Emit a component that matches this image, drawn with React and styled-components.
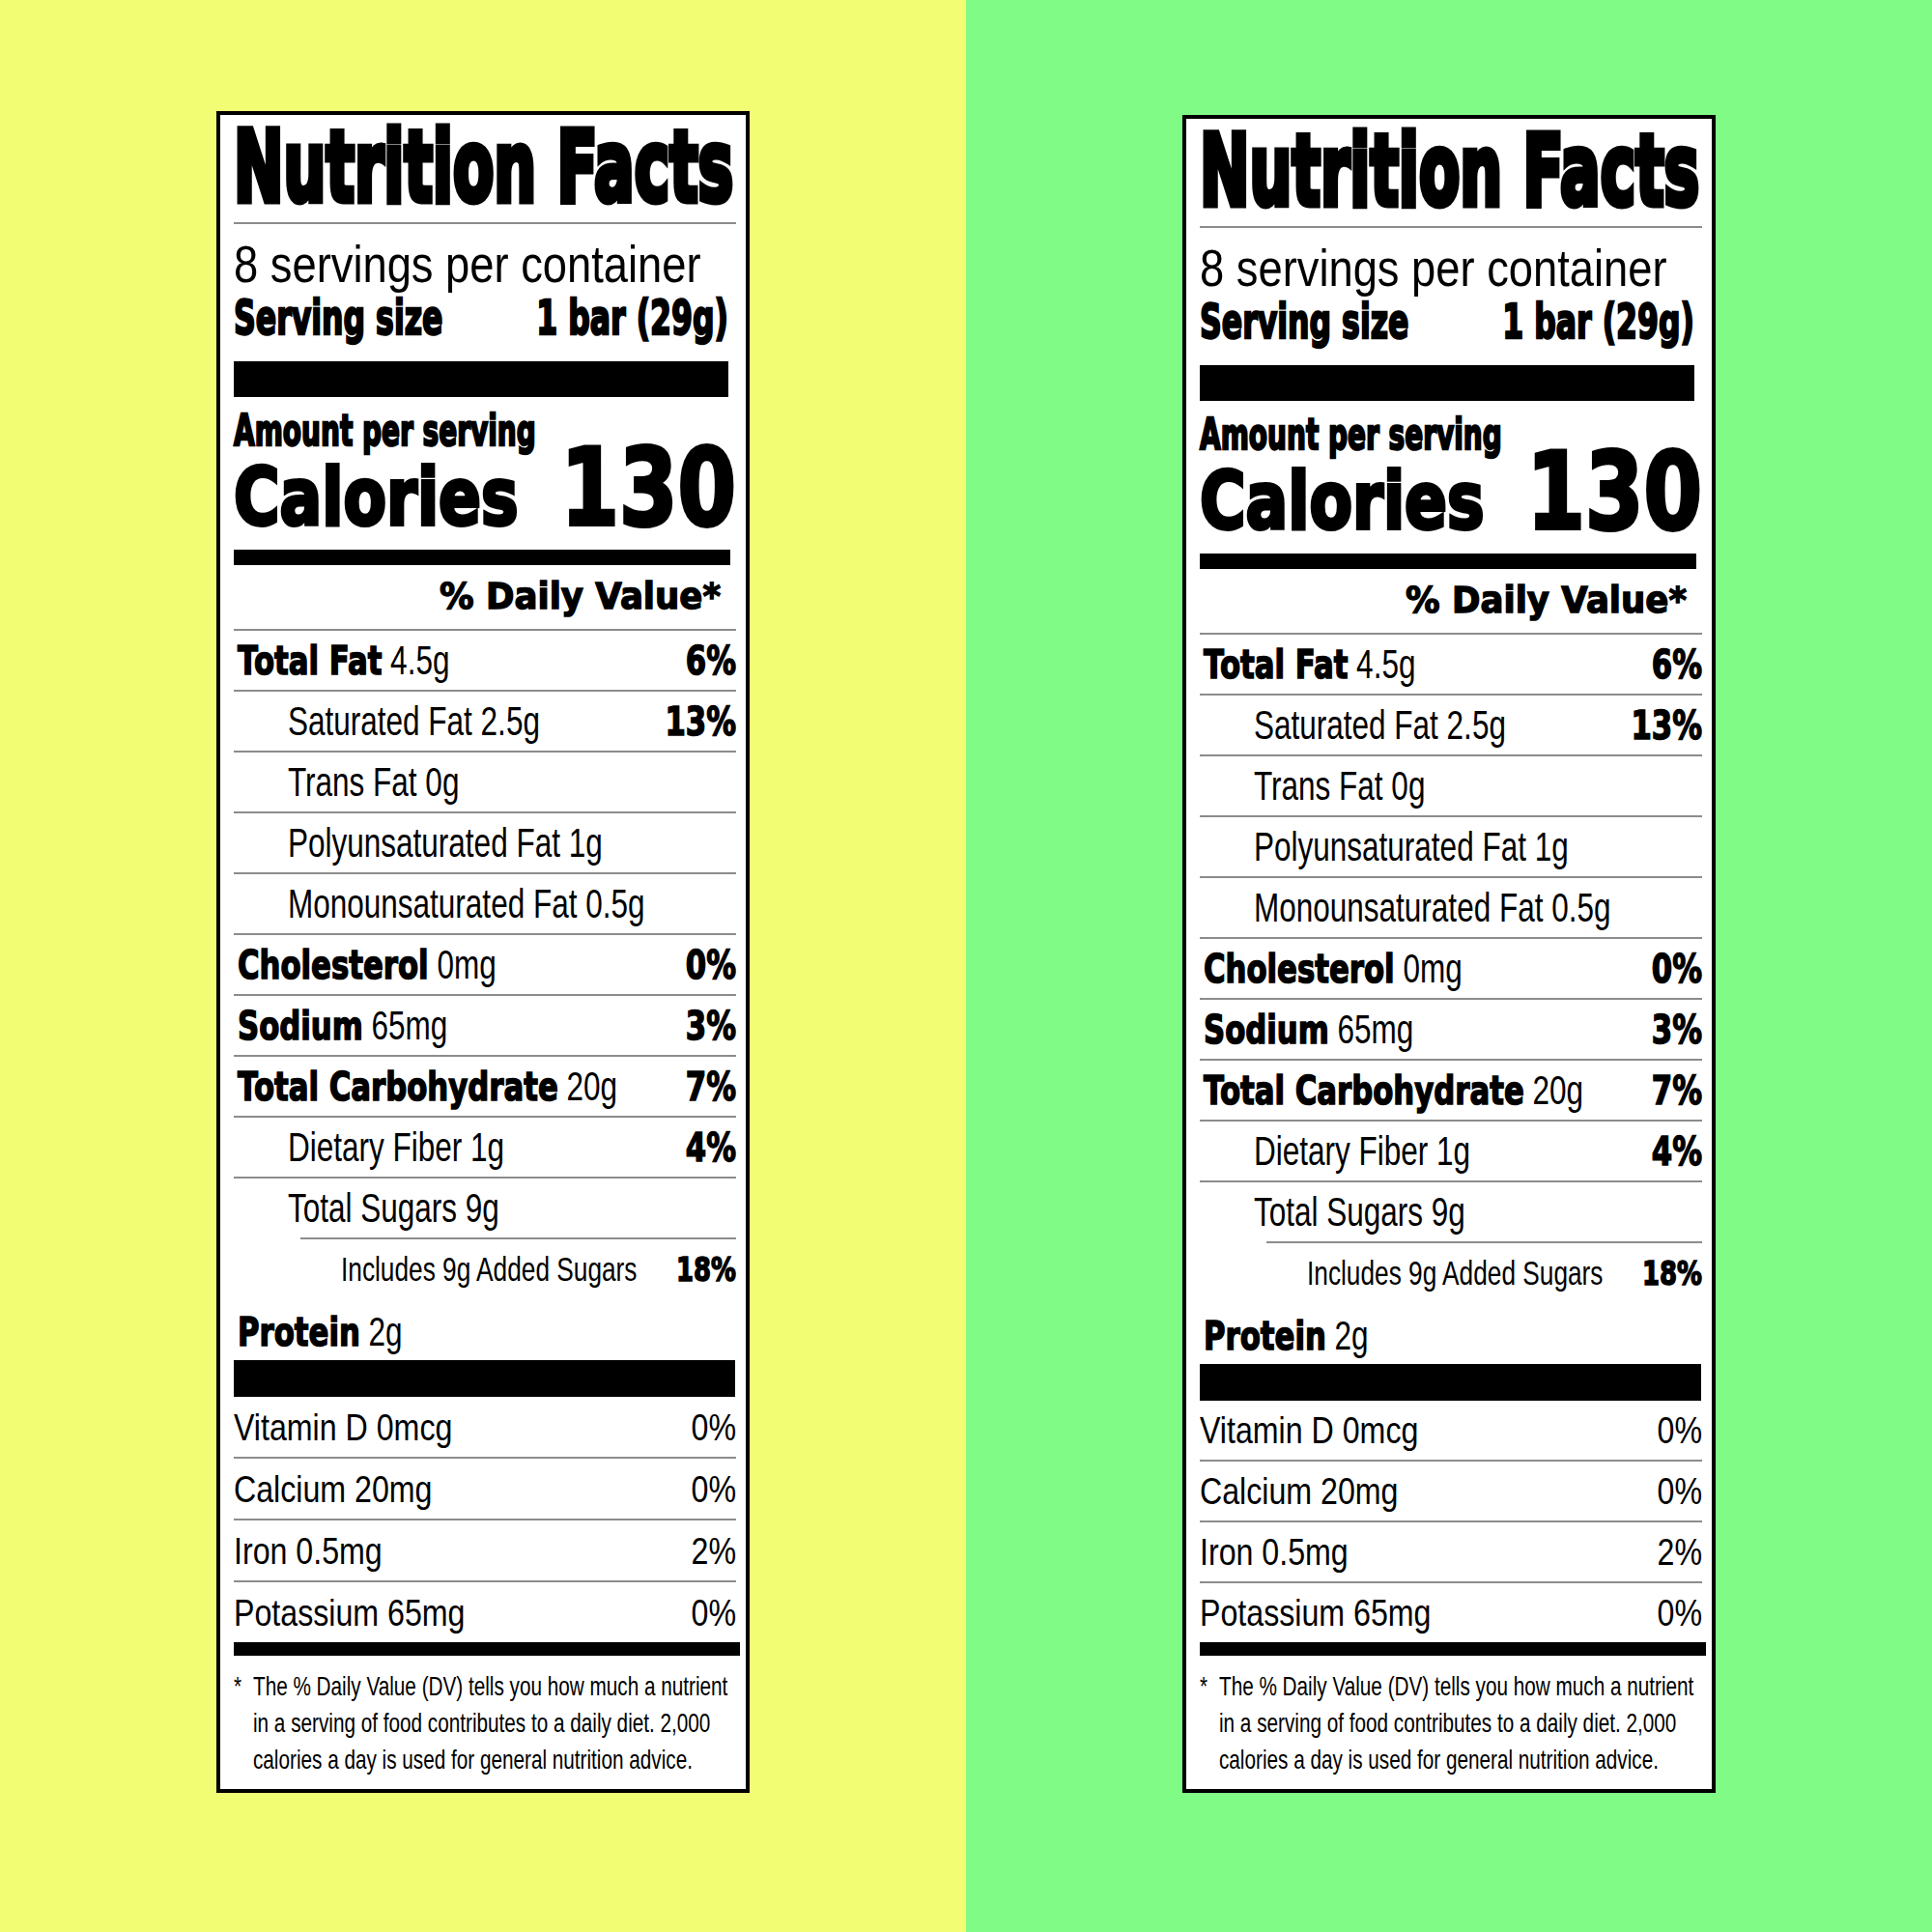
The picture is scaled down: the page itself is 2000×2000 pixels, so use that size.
import React from 'react'
import styled, { createGlobalStyle } from 'styled-components'

const GlobalStyle = createGlobalStyle`
  html, body {
    margin: 0;
    padding: 0;
  }
  body {
    font-family: 'Liberation Sans', Arial, sans-serif;
    color: #000;
  }
`

const Page = styled.div`
  display: flex;
  width: 2000px;
  height: 2000px;
`

const Half = styled.div`
  flex: 1;
  display: flex;
  justify-content: center;
  align-items: flex-start;
  box-sizing: border-box;
  padding-top: ${p => p.$top}px;
  background: ${p => p.$bg};
`

const Label = styled.section`
  width: 552px;
  box-sizing: border-box;
  display: flex;
  flex-direction: column;
  background: #fff;
  border: 4px solid #000;
  padding: 4px 10px 11px 14px;
`

// one line of label type, squeezed sideways like the condensed label face
const Line = styled.div`
  flex: none;
  box-sizing: border-box;
  width: ${p => 100 / p.$s}%;
  transform: scaleX(${p => p.$s});
  transform-origin: left center;
  display: flex;
  align-items: baseline;
  justify-content: ${p => p.$justify || 'space-between'};
  white-space: nowrap;
  font-size: ${p => p.$fs}px;
  line-height: ${p => p.$lh || p.$h}px;
  ${p => (p.$h ? `height: ${p.$h}px;` : '')}
  margin-top: ${p => p.$mt || 0}px;
  padding-left: ${p => (p.$indent || 0) / p.$s}px;
  padding-right: ${p => (p.$trim || 0) / p.$s}px;
`

const Heavy = styled.span`
  font-family: 'DejaVu Sans', 'Liberation Sans', sans-serif;
  font-weight: 700;
  ${p => (p.$fs ? `font-size: ${p.$fs}px;` : '')}
  -webkit-text-stroke: ${p => p.$stroke ?? 1.6}px #000;
`

const Rule = styled.div`
  flex: none;
  height: ${p => p.$w || 2}px;
  background: ${p => (p.$heavy ? '#000' : '#8c8c8c')};
  margin: ${p => p.$mt || 0}px ${p => p.$trim || 0}px 0 ${p => p.$inset || 0}px;
`

const Star = styled.span`
  flex: none;
  width: 27px;
`

const Note = styled.div`
  line-height: 38px;
`

const nutrients = [
  { name: 'Total Fat', amount: '4.5g', dv: '6%', level: 0 },
  { name: 'Saturated Fat 2.5g', dv: '13%', level: 1 },
  { name: 'Trans Fat 0g', level: 1 },
  { name: 'Polyunsaturated Fat 1g', level: 1 },
  { name: 'Monounsaturated Fat 0.5g', level: 1 },
  { name: 'Cholesterol', amount: '0mg', dv: '0%', level: 0 },
  { name: 'Sodium', amount: '65mg', dv: '3%', level: 0 },
  { name: 'Total Carbohydrate', amount: '20g', dv: '7%', level: 0 },
  { name: 'Dietary Fiber 1g', dv: '4%', level: 1 },
  { name: 'Total Sugars 9g', level: 1, ruleInset: 69 },
  { name: 'Includes 9g Added Sugars', dv: '18%', level: 2 },
]

const vitamins = [
  { name: 'Vitamin D 0mcg', dv: '0%' },
  { name: 'Calcium 20mg', dv: '0%' },
  { name: 'Iron 0.5mg', dv: '2%' },
  { name: 'Potassium 65mg', dv: '0%' },
]

const indents = [4, 56, 111]

const NutrientRow = ({ name, amount, dv, level }) => {
  const small = level === 2
  return (
    <Line $s={0.75} $h={61} $fs={small ? 35 : 42} $indent={indents[level]}>
      <span>
        {level === 0 ? (
          <>
            <Heavy $fs={41}>{name}</Heavy> {amount}
          </>
        ) : (
          name
        )}
      </span>
      {dv && <Heavy $fs={small ? 34.5 : 41}>{dv}</Heavy>}
    </Line>
  )
}

const FactsLabel = ({ compact }) => (
  <Label>
    <Line $s={0.607} $h={100} $fs={101.5}>
      <Heavy $stroke={7}>Nutrition Facts</Heavy>
    </Line>
    <Rule $mt={7} />

    <Line $s={0.855} $h={44} $fs={53} $mt={20}>
      <span>8 servings per container</span>
    </Line>
    <Line $s={0.644} $h={44} $fs={49} $mt={12} $trim={8}>
      <Heavy $stroke={2.5}>Serving size</Heavy>
      <Heavy $stroke={2.5}>1 bar (29g)</Heavy>
    </Line>
    <Rule $heavy $w={37} $mt={22} $trim={8} />

    <Line $s={0.636} $h={38} $fs={44} $mt={16}>
      <Heavy $stroke={2.5}>Amount per serving</Heavy>
    </Line>
    <Line $s={0.79} $lh={80} $fs={82}>
      <Heavy $stroke={4}>Calories</Heavy>
      <Heavy $fs={110} $stroke={4}>130</Heavy>
    </Line>
    <Rule $heavy $w={16} $mt={14} $trim={6} />

    <Line $s={0.96} $h={66} $fs={37} $justify="flex-end" $trim={16}>
      <Heavy $stroke={1.4}>% Daily Value*</Heavy>
    </Line>
    <Rule />

    {nutrients.map(n => (
      <React.Fragment key={n.name}>
        <NutrientRow {...n} />
        {n.level === 2 ? null : <Rule $inset={n.ruleInset} />}
      </React.Fragment>
    ))}
    <Line $s={0.75} $h={64} $lh={70} $fs={42} $indent={4}>
      <span>
        <Heavy $fs={41}>Protein</Heavy> 2g
      </span>
    </Line>
    <Rule $heavy $w={38} $trim={1} />

    {vitamins.map((v, i) => (
      <React.Fragment key={v.name}>
        <Line $s={0.814} $h={compact ? 61 : 62} $fs={39.5}>
          <span>{v.name}</span>
          <span>{v.dv}</span>
        </Line>
        {i < vitamins.length - 1 && <Rule />}
      </React.Fragment>
    ))}
    <Rule $heavy $w={14} $trim={-4} />

    <Line $s={0.74} $fs={28} $lh={38} $mt={13} $indent={-4} $justify="flex-start">
      <Star>*</Star>
      <Note>
        The % Daily Value (DV) tells you how much a nutrient
        <br />
        in a serving of food contributes to a daily diet. 2,000
        <br />
        calories a day is used for general nutrition advice.
      </Note>
    </Line>
  </Label>
)

const App = () => (
  <>
    <GlobalStyle />
    <Page>
      <Half $bg="#f2fd74" $top={115}>
        <FactsLabel />
      </Half>
      <Half $bg="#80fb86" $top={119}>
        <FactsLabel compact />
      </Half>
    </Page>
  </>
)

export default App
